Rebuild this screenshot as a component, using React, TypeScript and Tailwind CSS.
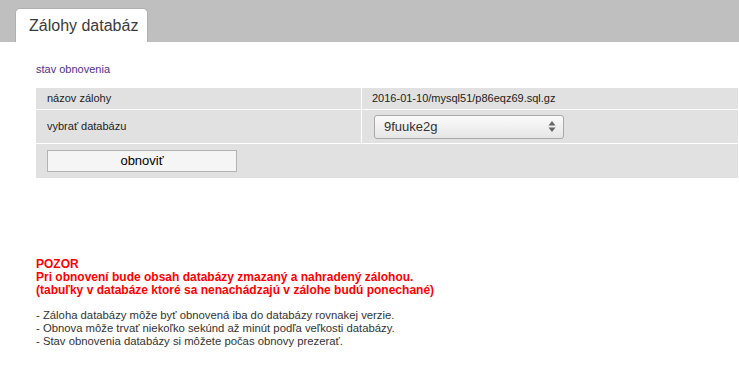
import React from 'react'

const App = () => {
  return (
    <div className="min-h-[368px] w-[739px] bg-white font-['Liberation_Sans',Arial,sans-serif] text-[11px] text-[#222]">
      {/* header band with tab */}
      <div className="flex h-[42px] items-end bg-[#bfbfbf] pl-[15px]">
        <div className="flex h-[34px] w-[133px] items-center rounded-t-[5px] border border-b-0 border-[#b0b0b0] bg-white pl-[13px] text-[16px] text-[#3a3a3a]">
          Zálohy databáz
        </div>
      </div>

      <div className="pl-[36px] pr-px pt-[21px]">
        <div className="leading-[13px] text-[#51308a]">stav obnovenia</div>

        <div className="mt-[12px] grid grid-cols-[325px_1fr] gap-px bg-white">
          <div className="flex h-[21px] items-center bg-[#e1e1e1] pl-[11px]">názov zálohy</div>
          <div className="flex h-[21px] items-center bg-[#e1e1e1] pl-[10px]">2016-01-10/mysql51/p86eqz69.sql.gz</div>

          <div className="flex h-[33px] items-center bg-[#e1e1e1] pl-[11px]">vybrať databázu</div>
          <div className="flex h-[33px] items-center bg-[#e1e1e1] pl-[12px]">
            <div className="flex h-[24px] w-[190px] items-center justify-between rounded-[3px] border border-[#a9a9a9] bg-gradient-to-b from-[#fbfbfb] to-[#e6e6e6] pl-[9px] pr-[7px] text-[13px] text-[#333]">
              <span>9fuuke2g</span>
              <svg width="8" height="13" viewBox="0 0 8 13">
                <path d="M4 1 L7.5 5.5 L0.5 5.5 Z" fill="#666" />
                <path d="M4 12 L7.5 7.5 L0.5 7.5 Z" fill="#666" />
              </svg>
            </div>
          </div>

          <div className="col-span-2 flex h-[34px] items-center bg-[#e1e1e1] pl-[11px]">
            <button className="h-[22px] w-[190px] border border-[#b3b3b3] bg-[#f5f5f5] text-[13px] text-black">
              obnoviť
            </button>
          </div>
        </div>

        <div className="mt-[80px] text-[12px] font-bold leading-[13px] text-[#ff0000]">
          <div>POZOR</div>
          <div>Pri obnovení bude obsah databázy zmazaný a nahradený zálohou.</div>
          <div>(tabuľky v databáze ktoré sa nenachádzajú v zálohe budú ponechané)</div>
        </div>

        <div className="mt-[12px] text-[11.3px] leading-[13px] text-[#333]">
          <div>- Záloha databázy môže byť obnovená iba do databázy rovnakej verzie.</div>
          <div>- Obnova môže trvať niekoľko sekúnd až minút podľa veľkosti databázy.</div>
          <div>- Stav obnovenia databázy si môžete počas obnovy prezerať.</div>
        </div>
      </div>
    </div>
  )
}

export default App
